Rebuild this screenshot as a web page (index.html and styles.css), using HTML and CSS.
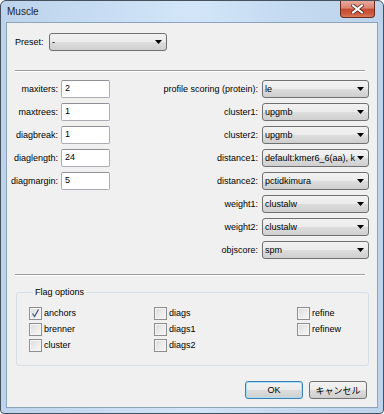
FILE: index.html
```html
<!DOCTYPE html>
<html lang="ja">
<head>
    <meta charset="UTF-8">
    <title>Muscle</title>
    <link rel="stylesheet" href="styles.css">
</head>
<body>
<div class="window">
    <div class="titlebar">
        <span class="title">Muscle</span>
        <span class="close">
            <svg width="13" height="10" viewBox="0 0 13 10">
                <path d="M2 1.5 L11 8.5 M11 1.5 L2 8.5" stroke="#5a2a22" stroke-width="3.6" stroke-linecap="square"/>
                <path d="M2 1.5 L11 8.5 M11 1.5 L2 8.5" stroke="#ffffff" stroke-width="2" stroke-linecap="square"/>
            </svg>
        </span>
    </div>
    <div class="client">
        <div class="preset-row">
            <span class="preset-label">Preset:</span>
            <div class="combo preset"><span class="combo-text">-</span><svg class="arrow" width="7" height="4" viewBox="0 0 7 4"><polygon points="0,0 7,0 3.5,4" fill="#000"/></svg></div>
        </div>
        <div class="sep"></div>

        <div class="params">
            <div class="col-left">
                <div class="row"><span class="lbl">maxiters:</span><div class="edit">2</div></div>
                <div class="row"><span class="lbl">maxtrees:</span><div class="edit">1</div></div>
                <div class="row"><span class="lbl">diagbreak:</span><div class="edit">1</div></div>
                <div class="row"><span class="lbl">diaglength:</span><div class="edit">24</div></div>
                <div class="row"><span class="lbl">diagmargin:</span><div class="edit">5</div></div>
            </div>
            <div class="col-right">
                <div class="row"><span class="lbl">profile scoring (protein):</span><div class="combo"><span class="combo-text">le</span><svg class="arrow" width="7" height="4" viewBox="0 0 7 4"><polygon points="0,0 7,0 3.5,4" fill="#000"/></svg></div></div>
                <div class="row"><span class="lbl">cluster1:</span><div class="combo"><span class="combo-text">upgmb</span><svg class="arrow" width="7" height="4" viewBox="0 0 7 4"><polygon points="0,0 7,0 3.5,4" fill="#000"/></svg></div></div>
                <div class="row"><span class="lbl">cluster2:</span><div class="combo"><span class="combo-text">upgmb</span><svg class="arrow" width="7" height="4" viewBox="0 0 7 4"><polygon points="0,0 7,0 3.5,4" fill="#000"/></svg></div></div>
                <div class="row"><span class="lbl">distance1:</span><div class="combo"><span class="combo-text">default:kmer6_6(aa), k</span><svg class="arrow" width="7" height="4" viewBox="0 0 7 4"><polygon points="0,0 7,0 3.5,4" fill="#000"/></svg></div></div>
                <div class="row"><span class="lbl">distance2:</span><div class="combo"><span class="combo-text">pctidkimura</span><svg class="arrow" width="7" height="4" viewBox="0 0 7 4"><polygon points="0,0 7,0 3.5,4" fill="#000"/></svg></div></div>
                <div class="row"><span class="lbl">weight1:</span><div class="combo"><span class="combo-text">clustalw</span><svg class="arrow" width="7" height="4" viewBox="0 0 7 4"><polygon points="0,0 7,0 3.5,4" fill="#000"/></svg></div></div>
                <div class="row"><span class="lbl">weight2:</span><div class="combo"><span class="combo-text">clustalw</span><svg class="arrow" width="7" height="4" viewBox="0 0 7 4"><polygon points="0,0 7,0 3.5,4" fill="#000"/></svg></div></div>
                <div class="row"><span class="lbl">objscore:</span><div class="combo"><span class="combo-text">spm</span><svg class="arrow" width="7" height="4" viewBox="0 0 7 4"><polygon points="0,0 7,0 3.5,4" fill="#000"/></svg></div></div>
            </div>
        </div>
        <div class="sep sep2"></div>

        <fieldset class="flags">
            <legend>Flag options</legend>
            <div class="flag-grid">
                <div class="flag"><span class="box checked"><svg width="11" height="11" viewBox="0 0 11 11"><path d="M2.5 5.5 L4.5 8.5 L8.5 1.5" stroke="#4a5d85" stroke-width="1.3" fill="none"/></svg></span>anchors</div>
                <div class="flag"><span class="box"></span>diags</div>
                <div class="flag"><span class="box"></span>refine</div>
                <div class="flag"><span class="box"></span>brenner</div>
                <div class="flag"><span class="box"></span>diags1</div>
                <div class="flag"><span class="box"></span>refinew</div>
                <div class="flag"><span class="box"></span>cluster</div>
                <div class="flag"><span class="box"></span>diags2</div>
            </div>
        </fieldset>

        <div class="buttons">
            <div class="btn default">OK</div>
            <div class="btn">キャンセル</div>
        </div>
    </div>
</div>
</body>
</html>
```

FILE: styles.css
```css
* {
    box-sizing: border-box;
}
body {
    margin: 0;
    font-family: "Liberation Sans", Arial, "Noto Sans CJK JP", sans-serif;
    font-size: 9px;
    color: #000;
}
.window {
    width: 384px;
    height: 414px;
    border: 1px solid #46515e;
    border-radius: 6px 6px 4px 4px;
    background: linear-gradient(to right, #bcd3eb 0%, #c9def4 30%, #d3e6f9 50%, #c4daf1 75%, #bcd3eb 100%);
    display: flex;
    flex-direction: column;
}
.titlebar {
    height: 21px;
    display: flex;
    justify-content: space-between;
    align-items: flex-start;
}
.title {
    padding: 5px 0 0 6px;
    font-size: 10px;
    color: #1e1e1e;
}
.close {
    width: 35px;
    height: 17px;
    margin-right: 8px;
    border: 1px solid #6b2a1f;
    border-top: none;
    border-radius: 0 0 4px 4px;
    background: linear-gradient(#e8aa9c 0%, #d9826f 45%, #c54b32 50%, #cd5a3e 80%, #dc7a5c 100%);
    display: flex;
    justify-content: center;
    align-items: center;
}
.client {
    margin: 0 5px 5px 5px;
    border: 1px solid #8ea4bc;
    background: #f0f0f0;
    flex: 1;
}
.preset-row {
    display: flex;
    align-items: center;
    padding: 10px 0 0 8px;
}
.preset-label {
    width: 34px;
}
.combo {
    height: 18px;
    width: 107px;
    border: 1px solid #707070;
    border-radius: 3px;
    background: linear-gradient(#f2f2f2 0%, #ebebeb 50%, #dddddd 50%, #cfcfcf 100%);
    display: flex;
    align-items: center;
    padding: 0 4px 0 2px;
}
.combo.preset {
    width: 118px;
}
.combo-text {
    flex: 1;
    white-space: nowrap;
}
.arrow {
    margin-left: 2px;
    flex: none;
}
.sep {
    margin: 19px 12px 0 8px;
    height: 2px;
    border-top: 1px solid #a0a0a0;
    border-bottom: 1px solid #ffffff;
}
.sep2 {
    margin-top: 15px;
}
.params {
    display: flex;
    justify-content: space-between;
    margin-top: 8px;
    padding-right: 8px;
}
.col-left,
.col-right {
    display: flex;
    flex-direction: column;
    gap: 5px;
}
.row {
    display: flex;
    align-items: center;
    justify-content: flex-end;
    height: 18px;
}
.col-left .lbl {
    width: 51px;
    text-align: right;
    margin-right: 3px;
}
.col-right .lbl {
    margin-right: 4px;
}
.edit {
    width: 49px;
    height: 18px;
    background: #fff;
    border: 1px solid #abadb3;
    border-top-color: #8e9095;
    border-radius: 2px;
    padding: 2px 0 0 3px;
}
.flags {
    margin: 10px 8px 0 9px;
    padding: 9px 0 10px 12px;
    border: 1px solid #d5dfe5;
    border-radius: 3px;
    min-width: 0;
}
.flags legend {
    margin-left: 4px;
    padding: 0 2px;
    line-height: 12px;
}
.flag-grid {
    display: grid;
    grid-template-columns: 125px 143px auto;
    grid-auto-rows: 16px;
}
.flag {
    display: flex;
    align-items: flex-start;
    gap: 2px;
    line-height: 13px;
}
.box {
    width: 13px;
    height: 13px;
    border: 1px solid #8f8f8f;
    background: linear-gradient(135deg, #dcdcdc, #f8f8f8);
    box-shadow: inset 0 0 0 1px #f4f4f4;
    display: flex;
    align-items: center;
    justify-content: center;
}
.buttons {
    display: flex;
    justify-content: flex-end;
    gap: 6px;
    margin-top: 15px;
    padding-right: 10px;
}
.btn {
    width: 58px;
    height: 18px;
    border: 1px solid #707070;
    border-radius: 3px;
    background: linear-gradient(#f2f2f2 0%, #ebebeb 50%, #dddddd 50%, #cfcfcf 100%);
    display: flex;
    align-items: center;
    justify-content: center;
}
.btn.default {
    border-color: #3c7fb1;
    box-shadow: inset 0 0 0 1px #a8e0f7;
}
```
